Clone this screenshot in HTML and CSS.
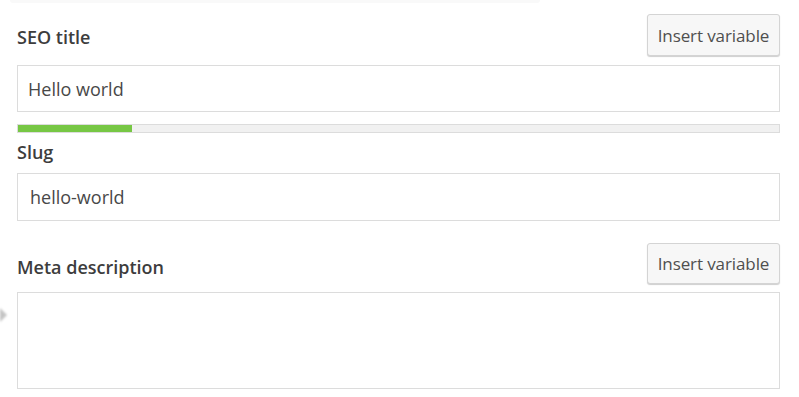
FILE: index.html
```html
<!DOCTYPE html>
<html>
<head>
<meta charset="utf-8">
<link rel="stylesheet" href="styles.css">
</head>
<body>
<div class="page">
  <div class="top-edge"></div>
  <div class="editor">
    <div class="field-head head-title">
      <span class="label">SEO title</span>
      <button class="insert-btn">Insert variable</button>
    </div>
    <div class="input input-title">Hello world</div>
    <div class="progress"><div class="progress-fill" style="width:15%"></div></div>
    <div class="label label-slug">Slug</div>
    <div class="input input-slug">hello-world</div>
    <div class="field-head head-meta">
      <span class="label">Meta description</span>
      <button class="insert-btn">Insert variable</button>
    </div>
    <div class="textarea-wrap">
      <span class="arrow"></span>
      <div class="textarea"></div>
    </div>
  </div>
</div>
</body>
</html>
```
FILE: styles.css
```css
html, body {
  margin: 0;
  padding: 0;
  background: #fff;
}
body {
  font-family: "Open Sans", "Noto Sans", "Liberation Sans", sans-serif;
  color: #444;
  width: 799px;
  height: 397px;
  overflow: hidden;
}
.page {
  display: flex;
  flex-direction: column;
}
.top-edge {
  height: 3px;
  width: 530px;
  margin-left: 10px;
  background: #f9f9f9;
  border-radius: 0 0 3px 3px;
}
.editor {
  display: flex;
  flex-direction: column;
  margin-left: 17px;
  width: 763px;
}
.field-head {
  display: flex;
  align-items: center;
  justify-content: space-between;
}
.head-title {
  margin-top: 11px;
  height: 42px;
}
.head-meta {
  margin-top: 22px;
  height: 41px;
}
.label {
  font-size: 18px;
  font-weight: 600;
  color: #3d3d3d;
  line-height: 20px;
  padding-top: 3px;
}
.head-meta .label {
  padding-top: 7px;
}
.insert-btn {
  font-family: inherit;
  height: 100%;
  width: 133px;
  padding: 0;
  background: #f7f7f7;
  border: 1px solid #d4d4d4;
  border-radius: 3px;
  box-shadow: 0 1px 1px #cfcfcf;
  color: #4f4f4f;
  font-size: 17px;
  letter-spacing: -0.1px;
}
.input {
  box-sizing: border-box;
  border: 1px solid #dcdcdc;
  background: #fff;
  display: flex;
  align-items: center;
  font-size: 18px;
  color: #484848;
}
.input-title {
  margin-top: 9px;
  height: 47px;
  padding-left: 10px;
}
.progress {
  box-sizing: border-box;
  margin-top: 12px;
  height: 9px;
  border: 1px solid #dcdcdc;
  background: #f1f1f1;
  display: flex;
}
.progress-fill {
  background: #77c744;
}
.label-slug {
  margin-top: 9px;
  padding-top: 0;
}
.input-slug {
  margin-top: 11px;
  height: 48px;
  padding-left: 12px;
}
.textarea-wrap {
  display: flex;
  margin-top: 8px;
}
.arrow {
  width: 0;
  height: 0;
  margin-left: -17px;
  margin-right: 10px;
  margin-top: 16px;
  border-top: 7px solid transparent;
  border-bottom: 7px solid transparent;
  border-left: 7px solid #c4c4c4;
  filter: blur(1px);
}
.textarea {
  box-sizing: border-box;
  flex: 1;
  height: 97px;
  border: 1px solid #dcdcdc;
  background: #fff;
}
```
